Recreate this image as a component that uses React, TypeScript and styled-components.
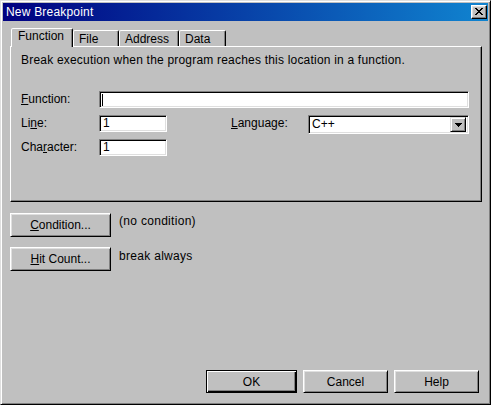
import React from "react";
import styled, { createGlobalStyle } from "styled-components";

const GlobalStyle = createGlobalStyle`
  html, body {
    margin: 0;
    padding: 0;
    background: #c0c0c0;
  }
  body {
    font-family: "Liberation Sans", Arial, sans-serif;
    font-size: 12px;
    color: #000;
  }
`;

// window frame
const Window = styled.div`
  width: 491px;
  height: 405px;
  box-sizing: border-box;
  display: flex;
  flex-direction: column;
  background: #c0c0c0;
  border: 1px solid;
  border-color: #dfdfdf #000 #000 #dfdfdf;
  box-shadow: inset 1px 1px #fff, inset -1px -1px #808080;
  padding: 2px;
`;

const TitleBar = styled.div`
  height: 18px;
  flex: none;
  display: flex;
  align-items: center;
  padding: 0 1px 0 3px;
  background: linear-gradient(to right, #000080, #1084d0);
  color: #fff;
  line-height: 18px;
`;

const Title = styled.span`
  flex: 1;
  letter-spacing: 0.2px;
`;

const CloseButton = styled.div`
  width: 16px;
  height: 14px;
  box-sizing: border-box;
  background: #c0c0c0;
  border: 1px solid;
  border-color: #fff #000 #000 #fff;
  box-shadow: inset -1px -1px #808080, inset 1px 1px #dfdfdf;
  display: flex;
  align-items: center;
  justify-content: center;
  padding: 0 0 1px 0;
`;

const Body = styled.div`
  flex: 1;
  display: flex;
  flex-direction: column;
  padding: 7px 6px 9px 7px;
`;

// tabs
const TabStrip = styled.div`
  display: flex;
  align-items: flex-end;
  height: 18px;
  padding-left: 1px;
  position: relative;
  z-index: 1;
`;

const Tab = styled.div<{ $active?: boolean; $w: number }>`
  width: ${(p) => p.$w}px;
  height: ${(p) => (p.$active ? 19 : 16)}px;
  margin-bottom: ${(p) => (p.$active ? -1 : 0)}px;
  box-sizing: border-box;
  background: #c0c0c0;
  border: 1px solid;
  border-bottom: none;
  border-color: #fff #000 transparent #fff;
  border-radius: 2px 2px 0 0;
  box-shadow: inset -1px 0 #808080;
  padding: ${(p) => (p.$active ? "0 0 0 6px" : "1px 0 0 5px")};
  line-height: 14px;
  white-space: nowrap;
`;

const Panel = styled.div`
  height: 156px;
  flex: none;
  box-sizing: border-box;
  border: 1px solid;
  border-color: #fff #000 #000 #fff;
  box-shadow: inset -1px -1px #808080;
  padding: 6px 9px 6px 10px;
`;

const Description = styled.div`
  line-height: 14px;
  letter-spacing: 0.2px;
`;

const FormGrid = styled.div`
  margin-top: 24px;
  display: grid;
  grid-template-columns: 78px 68px 64px 77px 161px;
  grid-auto-rows: 24px;
  align-items: start;
`;

const Label = styled.div<{ $col?: number }>`
  grid-column: ${(p) => p.$col ?? 1};
  height: 17px;
  line-height: 17px;
  white-space: nowrap;
`;

const TextBox = styled.div<{ $span?: string }>`
  grid-column: ${(p) => p.$span ?? "auto"};
  height: 17px;
  box-sizing: border-box;
  background: #fff;
  border: 1px solid;
  border-color: #808080 #fff #fff #808080;
  box-shadow: inset 1px 1px #000, inset -1px -1px #dfdfdf;
  padding: 0 3px;
  line-height: 15px;
  display: flex;
  align-items: center;
`;

const Caret = styled.span`
  width: 1px;
  height: 12px;
  background: #000;
  margin-left: -1px;
`;

const Combo = styled.div`
  grid-column: 5;
  height: 19px;
  box-sizing: border-box;
  background: #fff;
  border: 1px solid;
  border-color: #808080 #fff #fff #808080;
  box-shadow: inset 1px 1px #000, inset -1px -1px #dfdfdf;
  display: flex;
  align-items: center;
  padding: 2px 2px 2px 3px;
`;

const ComboValue = styled.span`
  flex: 1;
  line-height: 15px;
`;

const ComboArrow = styled.div`
  width: 16px;
  height: 15px;
  box-sizing: border-box;
  background: #c0c0c0;
  border: 1px solid;
  border-color: #dfdfdf #000 #000 #dfdfdf;
  box-shadow: inset 1px 1px #fff, inset -1px -1px #808080;
  display: flex;
  align-items: center;
  justify-content: center;
`;

// buttons
const ActionRow = styled.div<{ $top: number }>`
  display: flex;
  align-items: flex-start;
  gap: 8px;
  margin-top: ${(p) => p.$top}px;
`;

const Note = styled.span<{ $pad?: number }>`
  line-height: 14px;
  letter-spacing: 0.3px;
  padding-top: ${(p) => p.$pad ?? 1}px;
`;

const Button = styled.div<{ $w: number; $h?: number; $default?: boolean }>`
  width: ${(p) => p.$w}px;
  height: ${(p) => p.$h ?? 23}px;
  box-sizing: border-box;
  background: #c0c0c0;
  border: 1px solid;
  border-color: ${(p) => (p.$default ? "#000" : "#fff #000 #000 #fff")};
  box-shadow: ${(p) =>
    p.$default
      ? "inset 1px 1px #fff, inset -1px -1px #000, inset -2px -2px #808080"
      : "inset 1px 1px #dfdfdf, inset -1px -1px #808080"};
  display: flex;
  align-items: center;
  justify-content: center;
  white-space: nowrap;
`;

const Footer = styled.div`
  margin-top: auto;
  display: flex;
  justify-content: flex-end;
  gap: 6px;
  padding-right: 3px;
`;

function CloseGlyph() {
  return (
    <svg width="8" height="7" viewBox="0 0 8 7" shapeRendering="crispEdges">
      <path
        d="M0 0h2v1h-2zM6 0h2v1h-2zM1 1h2v1h-2zM5 1h2v1h-2zM2 2h4v1h-4zM3 3h2v1h-2zM2 4h4v1h-4zM1 5h2v1h-2zM5 5h2v1h-2zM0 6h2v1h-2zM6 6h2v1h-2z"
        fill="#000"
      />
    </svg>
  );
}

function DownGlyph() {
  return (
    <svg width="7" height="4" viewBox="0 0 7 4" shapeRendering="crispEdges">
      <path d="M0 0h7v1h-7zM1 1h5v1h-5zM2 2h3v1h-3zM3 3h1v1h-1z" fill="#000" />
    </svg>
  );
}

const tabs = [
  { name: "Function", w: 62 },
  { name: "File", w: 46 },
  { name: "Address", w: 60 },
  { name: "Data", w: 47 },
];

export default function App() {
  return (
    <>
      <GlobalStyle />
      <Window>
        <TitleBar>
          <Title>New Breakpoint</Title>
          <CloseButton>
            <CloseGlyph />
          </CloseButton>
        </TitleBar>
        <Body>
          <TabStrip>
            {tabs.map((t, i) => (
              <Tab key={t.name} $w={t.w} $active={i === 0}>
                {t.name}
              </Tab>
            ))}
          </TabStrip>
          <Panel>
            <Description>
              Break execution when the program reaches this location in a function.
            </Description>
            <FormGrid>
              <Label>
                <u>F</u>unction:
              </Label>
              <TextBox $span="2 / 6">
                <Caret />
              </TextBox>

              <Label>
                Li<u>n</u>e:
              </Label>
              <TextBox>1</TextBox>
              <Label $col={4}>
                <u>L</u>anguage:
              </Label>
              <Combo>
                <ComboValue>C++</ComboValue>
                <ComboArrow>
                  <DownGlyph />
                </ComboArrow>
              </Combo>

              <Label>
                Cha<u>r</u>acter:
              </Label>
              <TextBox>1</TextBox>
            </FormGrid>
          </Panel>

          <ActionRow $top={11}>
            <Button $w={101} $h={24}>
              <u>C</u>ondition...
            </Button>
            <Note $pad={1}>(no condition)</Note>
          </ActionRow>
          <ActionRow $top={10}>
            <Button $w={101} $h={24}>
              <u>H</u>it Count...
            </Button>
            <Note $pad={2}>break always</Note>
          </ActionRow>

          <Footer>
            <Button $w={91} $default>
              OK
            </Button>
            <Button $w={85}>Cancel</Button>
            <Button $w={85}>Help</Button>
          </Footer>
        </Body>
      </Window>
    </>
  );
}
